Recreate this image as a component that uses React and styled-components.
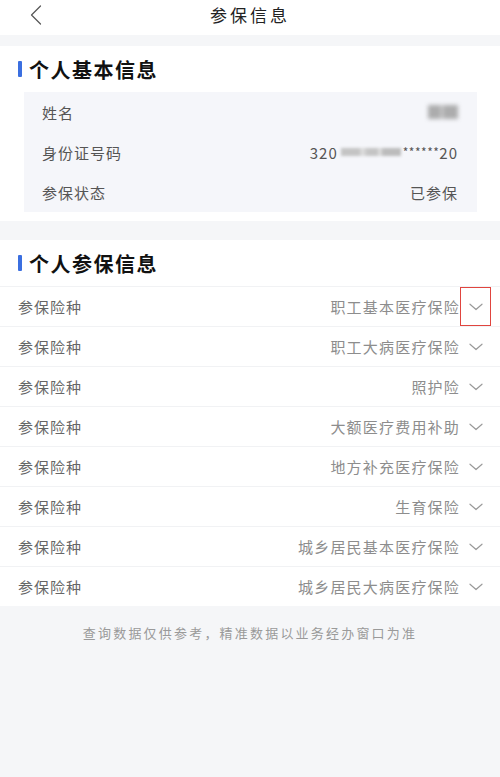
import React from "react";
import styled, { createGlobalStyle } from "styled-components";

const Global = createGlobalStyle`
  html, body { margin: 0; padding: 0; background: #f5f6f8; }
  body { font-family: "Noto Sans CJK SC", "Noto Sans", sans-serif; }
`;

const Page = styled.div`
  width: 500px;
  min-height: 777px;
  background: #f5f6f8;
  display: flex;
  flex-direction: column;
`;

const Header = styled.header`
  height: 35px;
  box-sizing: border-box;
  padding-bottom: 5px;
  background: #fff;
  display: grid;
  grid-template-columns: 60px 1fr 60px;
  align-items: center;
  margin-bottom: 11px;
`;

const Back = styled.button`
  border: 0;
  background: none;
  padding: 0 0 0 30px;
  height: 30px;
  display: flex;
  align-items: center;
`;

const Title = styled.h1`
  margin: 0;
  text-align: center;
  font-size: 17px;
  font-weight: 400;
  letter-spacing: 3px;
  color: #222;
  line-height: 30px;
`;

const Section = styled.section`
  background: #fff;
  margin-bottom: ${(p) => p.$gap || 0}px;
  padding-bottom: ${(p) => p.$pb || 0}px;
`;

const SectionTitle = styled.h2`
  margin: 0;
  height: ${(p) => p.$h || 46}px;
  display: flex;
  align-items: center;
  padding-left: 18px;
  gap: 7px;
  font-size: 20px;
  font-weight: 700;
  letter-spacing: 1.5px;
  color: #111;
  &::before {
    content: "";
    width: 4px;
    height: 16px;
    background: #3b6fe0;
    border-radius: 1px;
  }
`;

const InfoCard = styled.div`
  margin: 0 23px 0 24px;
  background: #f5f6fa;
`;

const InfoRow = styled.div`
  height: 40px;
  display: flex;
  align-items: center;
  justify-content: space-between;
  padding: 0 19px 0 18px;
  font-size: 15px;
  letter-spacing: 1px;
`;

const InfoLabel = styled.span`
  color: #555;
`;

const InfoValue = styled.span`
  color: #555;
  display: flex;
  align-items: center;
`;

const BlurName = styled.span`
  display: inline-block;
  width: 30px;
  height: 14px;
  background: linear-gradient(90deg, #9a9a9a 0 40%, #c8c8c8 45%, #9a9a9a 55% 100%);
  filter: blur(2px);
  opacity: 0.8;
`;

const BlurDigits = styled.span`
  display: inline-block;
  width: 60px;
  height: 8px;
  margin: 0 2px 0 3px;
  background: linear-gradient(90deg, #c4c4c4 0 30%, #e0e0e0 35%, #c4c4c4 45% 60%, #e4e4e4 65%, #bcbcbc 70% 100%);
  filter: blur(1.5px);
`;

const Stars = styled.span`
  font-size: 12px;
  letter-spacing: 0.5px;
  align-self: flex-start;
  margin-top: 1px;
`;

const List = styled.div`
  border-top: 1px solid #f1f2f4;
`;

const ItemRow = styled.div`
  height: 39px;
  border-bottom: 1px solid #f1f2f4;
  display: flex;
  align-items: center;
  padding: 0 0 0 18px;
  font-size: 15px;
  letter-spacing: 1px;
  &:last-child { border-bottom: 0; }
`;

const ItemLabel = styled.span`
  color: #666;
  flex: 1;
`;

const ItemValue = styled.span`
  color: #8d8d8d;
  letter-spacing: 1.2px;
`;

const Toggle = styled.span`
  width: 31px;
  height: 39px;
  box-sizing: border-box;
  margin-right: 9px;
  display: flex;
  align-items: center;
  justify-content: center;
  border: 1px solid ${(p) => (p.$active ? "#e0453f" : "transparent")};
`;

const Footer = styled.p`
  margin: 0;
  padding-top: 17px;
  text-align: center;
  font-size: 13px;
  letter-spacing: 2.2px;
  color: #9a9a9a;
`;

const Chevron = () => (
  <svg width="14" height="8" viewBox="0 0 14 8" fill="none">
    <path d="M1 1.2 L7 6.5 L13 1.2" stroke="#9a9a9a" strokeWidth="1.2" strokeLinecap="round" strokeLinejoin="round" />
  </svg>
);

const items = [
  "职工基本医疗保险",
  "职工大病医疗保险",
  "照护险",
  "大额医疗费用补助",
  "地方补充医疗保险",
  "生育保险",
  "城乡居民基本医疗保险",
  "城乡居民大病医疗保险",
];

export default function App() {
  return (
    <Page>
      <Global />
      <Header>
        <Back aria-label="返回">
          <svg width="12" height="20" viewBox="0 0 12 20" fill="none">
            <path d="M10.5 1 L1.5 10 L10.5 19" stroke="#555" strokeWidth="1.2" strokeLinecap="round" strokeLinejoin="round" />
          </svg>
        </Back>
        <Title>参保信息</Title>
        <span />
      </Header>

      <Section $gap={19} $pb={9}>
        <SectionTitle>个人基本信息</SectionTitle>
        <InfoCard>
          <InfoRow>
            <InfoLabel>姓名</InfoLabel>
            <InfoValue><BlurName /></InfoValue>
          </InfoRow>
          <InfoRow>
            <InfoLabel>身份证号码</InfoLabel>
            <InfoValue>
              320<BlurDigits /><Stars>******</Stars>20
            </InfoValue>
          </InfoRow>
          <InfoRow>
            <InfoLabel>参保状态</InfoLabel>
            <InfoValue>已参保</InfoValue>
          </InfoRow>
        </InfoCard>
      </Section>

      <Section>
        <SectionTitle>个人参保信息</SectionTitle>
        <List>
          {items.map((it, i) => (
            <ItemRow key={i}>
              <ItemLabel>参保险种</ItemLabel>
              <ItemValue>{it}</ItemValue>
              <Toggle $active={i === 0}>
                <Chevron />
              </Toggle>
            </ItemRow>
          ))}
        </List>
      </Section>

      <Footer>查询数据仅供参考，精准数据以业务经办窗口为准</Footer>
    </Page>
  );
}
